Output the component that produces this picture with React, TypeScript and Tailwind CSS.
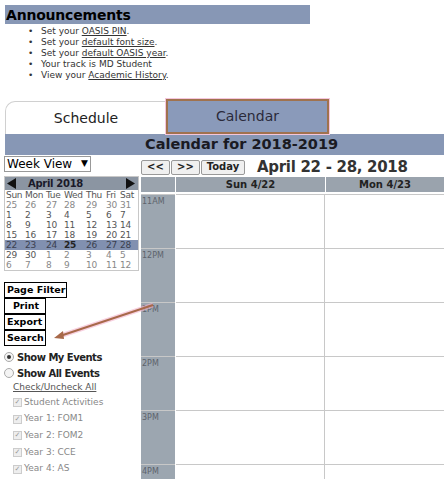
import React from 'react'

const FONT = { fontFamily: '"DejaVu Sans", Verdana, sans-serif' }

const WEEKS: { d: string; c: 'prev' | 'cur' | 'next' }[][] = [
  ['25', '26', '27', '28', '29', '30', '31'].map((d) => ({ d, c: 'prev' as const })),
  ['1', '2', '3', '4', '5', '6', '7'].map((d) => ({ d, c: 'cur' as const })),
  ['8', '9', '10', '11', '12', '13', '14'].map((d) => ({ d, c: 'cur' as const })),
  ['15', '16', '17', '18', '19', '20', '21'].map((d) => ({ d, c: 'cur' as const })),
  ['22', '23', '24', '25', '26', '27', '28'].map((d) => ({ d, c: 'cur' as const })),
  [
    { d: '29', c: 'cur' },
    { d: '30', c: 'cur' },
    ...['1', '2', '3', '4', '5'].map((d) => ({ d, c: 'next' as const })),
  ],
  ['6', '7', '8', '9', '10', '11', '12'].map((d) => ({ d, c: 'next' as const })),
]

const HOURS = ['11AM', '12PM', '1PM', '2PM', '3PM', '4PM']

const FILTERS = ['Student Activities', 'Year 1: FOM1', 'Year 2: FOM2', 'Year 3: CCE', 'Year 4: AS']

function Announcements() {
  const items: React.ReactNode[] = [
    <>Set your <a className="underline">OASIS PIN</a>.</>,
    <>Set your <a className="underline">default font size</a>.</>,
    <>Set your <a className="underline">default OASIS year</a>.</>,
    <>Your track is MD Student</>,
    <>View your <a className="underline">Academic History</a>.</>,
  ]
  return (
    <div className="pt-[5px]">
      <div className="ml-[5px] flex h-[19px] w-[305px] items-center bg-[#8797b5] pl-[1px] text-[14px] font-bold leading-none tracking-[-0.2px] text-black">
        Announcements
      </div>
      <ul className="mt-[2px] text-[9px] leading-[11px] text-[#333]">
        {items.map((it, i) => (
          <li key={i} className="flex">
            <span className="w-[41px] pl-[28px]">•</span>
            <span>{it}</span>
          </li>
        ))}
      </ul>
    </div>
  )
}

function Tabs() {
  return (
    <div className="mt-[18px] flex items-end pl-[5px]">
      <div className="flex h-[33px] w-[161px] items-center justify-center rounded-tl-[10px] border-l border-t border-[#d0d0d0] text-[14px] text-[#222]">
        Schedule
      </div>
      <div className="flex h-[35px] w-[163px] items-center justify-center border-2 border-[#a0724e] bg-[#8a9aba] text-[14px] text-[#2a2a3a] shadow-[0_0_0_1px_#f5c6dc]">
        Calendar
      </div>
    </div>
  )
}

function MiniCal() {
  const head = ['Sun', 'Mon', 'Tue', 'Wed', 'Thu', 'Fri', 'Sat']
  const cols = 'grid-cols-[19px_21px_18px_22px_20px_14px_19px]'
  return (
    <div className="mt-[4px] w-[135px] border border-[#c8c8c8] text-[9px] leading-[10px] tracking-[-0.3px]">
      <div className="flex h-[13px] items-center bg-[#8b95a2] pl-[2px] pr-[3px]">
        <svg width="9" height="11" viewBox="0 0 9 11">
          <path d="M9 0 L0 5.5 L9 11 Z" fill="#111" />
        </svg>
        <span className="ml-[12px] text-[10px] font-bold tracking-[-0.3px] text-[#1a1a2a]">April 2018</span>
        <svg className="ml-auto" width="9" height="11" viewBox="0 0 9 11">
          <path d="M0 0 L9 5.5 L0 11 Z" fill="#111" />
        </svg>
      </div>
      <div className={`grid h-[10px] ${cols} pl-[1px] text-[#555]`}>
        {head.map((h) => (
          <span key={h}>{h}</span>
        ))}
      </div>
      {WEEKS.map((w, i) => (
        <div key={i} className={`grid h-[10px] ${cols} pl-[1px] ${i === 4 ? 'bg-[#8190b0]' : ''}`}>
          {w.map((c, j) => (
            <span
              key={j}
              className={
                i === 4 && j === 3
                  ? 'font-bold text-[#222]'
                  : i === 4
                    ? 'text-[#3a3f4e]'
                    : c.c === 'cur'
                      ? 'text-[#555]'
                      : 'text-[#888]'
              }
            >
              {c.d}
            </span>
          ))}
        </div>
      ))}
    </div>
  )
}

function LeftPanel() {
  return (
    <div className="w-[141px] shrink-0 pl-[4px]">
      <div className="mt-[1px] flex h-[16px] w-[87px] items-center justify-between border border-[#999] px-[2px] text-[12px] text-black">
        <span>Week View</span>
        <span className="text-[9px]">▼</span>
      </div>
      <MiniCal />
      <div className="mt-[11px] flex flex-col items-start whitespace-nowrap text-[9.5px] font-bold text-black">
        <button className="h-[16px] w-[63px] border border-black bg-white pl-[2px] text-left leading-none">
          Page Filter
        </button>
        <button className="h-[16px] w-[42px] border border-black bg-white pl-[2px] leading-none">
          Print
        </button>
        <button className="h-[16px] w-[42px] border border-black bg-white pl-[2px] text-left leading-none">
          Export
        </button>
        <button className="h-[16px] w-[42px] border border-black bg-white pl-[2px] text-left leading-none">
          Search
        </button>
      </div>
      <div className="mt-[3px] text-[10px] font-bold tracking-[-0.5px] text-[#222]">
        <label className="flex h-[16px] items-center gap-[3px]">
          <span className="flex h-[10px] w-[10px] items-center justify-center rounded-full border border-[#aaa] bg-[#f4f4f4]">
            <span className="h-[4px] w-[4px] rounded-full bg-[#333]" />
          </span>
          Show My Events
        </label>
        <label className="flex h-[16px] items-center gap-[3px]">
          <span className="h-[10px] w-[10px] rounded-full border border-[#aaa] bg-[#f4f4f4]" />
          Show All Events
        </label>
      </div>
      <div className="ml-[9px] mt-[1px] text-[9px] leading-[11px] text-[#555] underline">Check/Uncheck All</div>
      <div className="ml-[9px] mt-[1px] text-[9px] text-[#888]">
        {FILTERS.map((f) => (
          <div key={f} className="flex h-[16.7px] items-center gap-[2px]">
            <span className="flex h-[9px] w-[9px] items-center justify-center border border-[#ccc] bg-[#eee] text-[7px] leading-none text-[#999]">
              ✓
            </span>
            {f}
          </div>
        ))}
      </div>
    </div>
  )
}

function WeekGrid() {
  return (
    <div className="flex-1">
      <div className="flex h-[22px] items-center pt-[2px]">
        <div className="flex text-[10px] font-bold text-[#222]">
          <button className="h-[15px] w-[29px] rounded-[2px] border border-[#999] bg-[#f0f0f0] leading-none">&lt;&lt;</button>
          <button className="ml-[1px] h-[15px] w-[29px] rounded-[2px] border border-[#999] bg-[#f0f0f0] leading-none">&gt;&gt;</button>
          <button className="ml-[1px] h-[15px] w-[44px] rounded-[2px] border border-[#999] bg-[#f0f0f0] leading-none">Today</button>
        </div>
        <span className="ml-[12px] text-[15px] font-bold tracking-[-0.3px] text-[#333]">April 22 - 28, 2018</span>
      </div>
      <div className="flex h-[15px] gap-[1px] text-[10px] font-bold text-[#222]">
        <div className="w-[34px] bg-[#9aa3ad]" />
        <div className="flex w-[149px] items-center justify-center bg-[#9aa3ad]">Sun 4/22</div>
        <div className="flex flex-1 items-center justify-center bg-[#9aa3ad]">Mon 4/23</div>
      </div>
      <div className="mt-[2px] flex">
        <div className="w-[34px] bg-[#9ca6b0] text-[8px] text-[#5c636c]">
          {HOURS.map((h) => (
            <div key={h} className="h-[54px] border-t border-[#c8c8c8] pl-[1px] pt-[1px]">
              {h}
            </div>
          ))}
        </div>
        <div className="ml-[1px] w-[149px] border-r border-[#c8c8c8]">
          {HOURS.map((h) => (
            <div key={h} className="h-[54px] border-t border-[#c8c8c8]" />
          ))}
        </div>
        <div className="flex-1">
          {HOURS.map((h) => (
            <div key={h} className="h-[54px] border-t border-[#c8c8c8]" />
          ))}
        </div>
      </div>
    </div>
  )
}

export default function App() {
  return (
    <div className="relative h-[479px] w-[444px] overflow-hidden bg-white" style={FONT}>
      <Announcements />
      <Tabs />
      <div className="ml-[5px] flex h-[21px] items-center bg-[#8797b5] pl-[140px] text-[14.5px] font-bold text-[#1a1a22]">
        Calendar for 2018-2019
      </div>
      <div className="flex">
        <LeftPanel />
        <WeekGrid />
      </div>
      <svg className="pointer-events-none absolute left-0 top-0" width="444" height="479">
        <line x1="153" y1="305" x2="60" y2="336" stroke="#f4b3cc" strokeWidth="5" strokeOpacity="0.6" />
        <line x1="153" y1="305" x2="60" y2="336" stroke="#a8694a" strokeWidth="2" />
        <path d="M54 338 L63 331 L64 339 Z" fill="#a8694a" />
      </svg>
    </div>
  )
}
